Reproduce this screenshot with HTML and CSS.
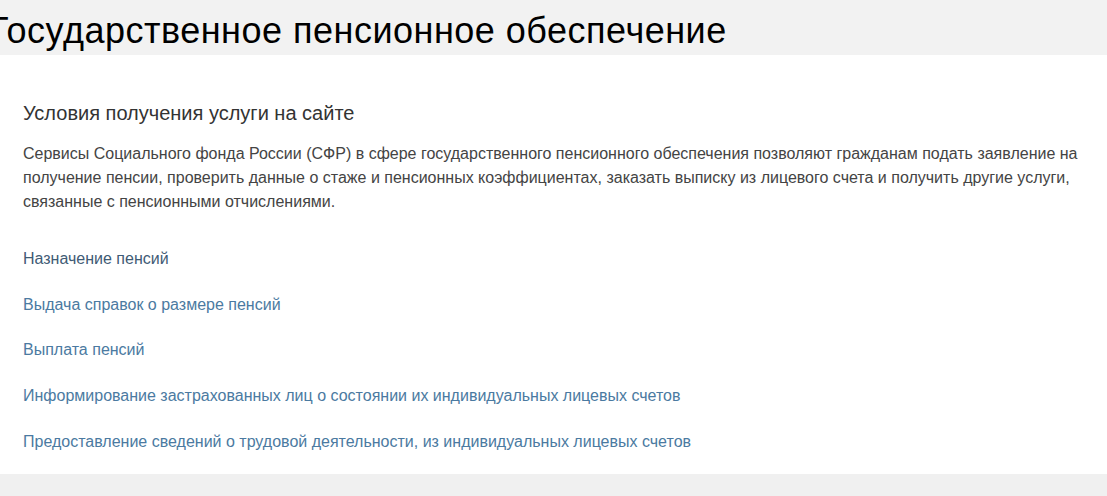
FILE: index.html
```html
<!DOCTYPE html>
<html lang="ru">

<head>
  <meta charset="utf-8">
  <title>Государственное пенсионное обеспечение</title>
  <link rel="stylesheet" href="styles.css">
</head>

<body>
  <div class="header">
    <h1 class="title">Государственное пенсионное обеспечение</h1>
  </div>
  <div class="panel">
    <h2 class="subtitle">Условия получения услуги на сайте</h2>
    <p class="text">Сервисы Социального фонда России (СФР) в сфере государственного пенсионного обеспечения позволяют гражданам подать заявление на получение пенсии, проверить данные о стаже и пенсионных коэффициентах, заказать выписку из лицевого счета и получить другие услуги, связанные с пенсионными отчислениями.</p>
    <ul class="links">
      <li><a class="link visited" href="#">Назначение пенсий</a></li>
      <li><a class="link" href="#">Выдача справок о размере пенсий</a></li>
      <li><a class="link" href="#">Выплата пенсий</a></li>
      <li><a class="link" href="#">Информирование застрахованных лиц о состоянии их индивидуальных лицевых счетов</a></li>
      <li><a class="link" href="#">Предоставление сведений о трудовой деятельности, из индивидуальных лицевых счетов</a></li>
    </ul>
  </div>
</body>

</html>
```

FILE: styles.css
```css
body {
  margin: 0;
  background-color: #f0f0f0;
  font-family: "Liberation Sans", Arial, sans-serif;
  overflow: hidden;
}

.header {
  background-color: #f2f2f2;
  height: 55px;
}

.title {
  margin: 0 0 0 -11px;
  padding-top: 7px;
  font-size: 36px;
  line-height: 48px;
  font-weight: normal;
  letter-spacing: 0.5px;
  color: #000;
  white-space: nowrap;
}

.panel {
  background-color: #fff;
  padding: 46px 23px 20px;
}

.subtitle {
  margin: 0;
  font-size: 20px;
  line-height: 24px;
  font-weight: normal;
  color: #333;
}

.text {
  margin: 17px 0 0;
  font-size: 16px;
  line-height: 24px;
  color: #444;
}

.links {
  list-style: none;
  margin: 33px 0 0;
  padding: 0;
  display: flex;
  flex-direction: column;
  gap: 21.7px;
}

.links li {
  font-size: 16px;
  line-height: 24px;
}

.link {
  color: #4b7aa1;
  text-decoration: none;
}

.link.visited {
  color: #3f5b75;
}
```
